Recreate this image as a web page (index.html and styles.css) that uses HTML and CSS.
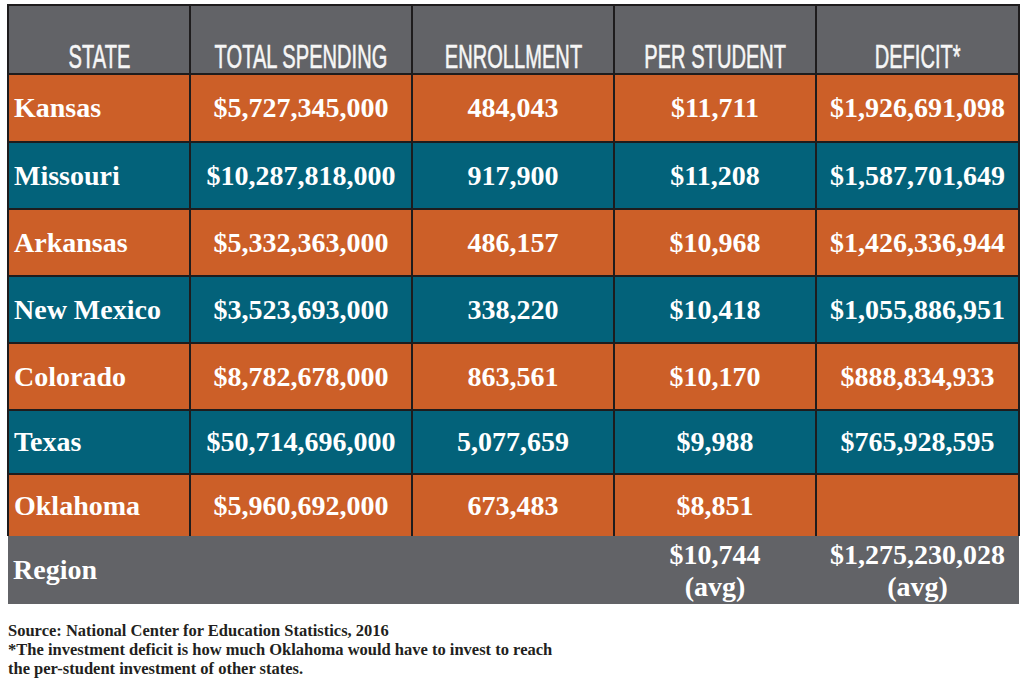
FILE: index.html
```html
<!DOCTYPE html>
<html>
<head>
<meta charset="utf-8">
<link rel="stylesheet" href="styles.css">
</head>
<body>
<table class="grid">
  <colgroup>
    <col class="c-state"><col class="c-total"><col class="c-num"><col class="c-num"><col class="c-def">
  </colgroup>
  <thead>
    <tr class="head">
      <th><div class="hwrap"><span class="hd">STATE</span></div></th>
      <th><div class="hwrap"><span class="hd">TOTAL SPENDING</span></div></th>
      <th><div class="hwrap"><span class="hd">ENROLLMENT</span></div></th>
      <th><div class="hwrap"><span class="hd">PER STUDENT</span></div></th>
      <th><div class="hwrap"><span class="hd">DEFICIT*</span></div></th>
    </tr>
  </thead>
  <tbody>
    <tr class="orange r1"><td class="state">Kansas</td><td>$5,727,345,000</td><td>484,043</td><td>$11,711</td><td>$1,926,691,098</td></tr>
    <tr class="teal r2"><td class="state">Missouri</td><td>$10,287,818,000</td><td>917,900</td><td>$11,208</td><td>$1,587,701,649</td></tr>
    <tr class="orange r3"><td class="state">Arkansas</td><td>$5,332,363,000</td><td>486,157</td><td>$10,968</td><td>$1,426,336,944</td></tr>
    <tr class="teal r4"><td class="state">New Mexico</td><td>$3,523,693,000</td><td>338,220</td><td>$10,418</td><td>$1,055,886,951</td></tr>
    <tr class="orange r5"><td class="state">Colorado</td><td>$8,782,678,000</td><td>863,561</td><td>$10,170</td><td>$888,834,933</td></tr>
    <tr class="teal r6"><td class="state">Texas</td><td>$50,714,696,000</td><td>5,077,659</td><td>$9,988</td><td>$765,928,595</td></tr>
    <tr class="orange r7"><td class="state">Oklahoma</td><td>$5,960,692,000</td><td>673,483</td><td>$8,851</td><td></td></tr>
    <tr class="region"><td class="state">Region</td><td></td><td></td><td class="two">$10,744<br>(avg)</td><td class="two">$1,275,230,028<br>(avg)</td></tr>
  </tbody>
</table>
<p class="note">Source: National Center for Education Statistics, 2016<br>*The investment deficit is how much Oklahoma would have to invest to reach<br>the per-student investment of other states.</p>
</body>
</html>
```

FILE: styles.css
```css
html, body {
  margin: 0;
  padding: 0;
  background: #ffffff;
}

.grid {
  border-collapse: collapse;
  table-layout: fixed;
  width: 1011px;
  margin: 4px 0 0 7px;
  font-family: "Liberation Serif", "Times New Roman", serif;
  font-weight: bold;
  font-size: 28px;
  color: #ffffff;
}

.c-state { width: 182px; }
.c-total { width: 222px; }
.c-num { width: 202px; }
.c-def { width: 203px; }

.grid th,
.grid td {
  border: 2px solid #1e1c1d;
  padding: 0;
  text-align: center;
  vertical-align: middle;
  white-space: nowrap;
}

.head th {
  background: #626367;
  height: 67px;
  vertical-align: bottom;
  font-family: "Liberation Sans", Arial, sans-serif;
  font-weight: normal;
  font-size: 33.5px;
  line-height: 33.5px;
  padding-bottom: 0;
}

.hwrap {
  display: flex;
  justify-content: center;
  width: 100%;
}

.hd {
  display: inline-block;
  flex: none;
  transform: scaleX(0.6);
  transform-origin: center;
  color: #f6f6f6;
  -webkit-text-stroke: 0.6px #f6f6f6;
}

.orange td { background: #cc5f28; }
.teal td { background: #03627a; }

.r1 td { height: 66px; }
.r2 td, .r3 td, .r4 td, .r5 td { height: 65px; }
.r6 td { height: 62px; }
.r7 td { height: 61px; }

.grid td.state {
  text-align: left;
  padding-left: 5px;
}

.region td {
  background: #626367;
  height: 66px;
  border-style: hidden;
}

.region td.two {
  line-height: 32px;
  padding-top: 2px;
}

.note {
  margin: 17px 0 0 8px;
  font-family: "Liberation Serif", "Times New Roman", serif;
  font-weight: bold;
  font-size: 16.5px;
  line-height: 19px;
  color: #231f20;
}
```
